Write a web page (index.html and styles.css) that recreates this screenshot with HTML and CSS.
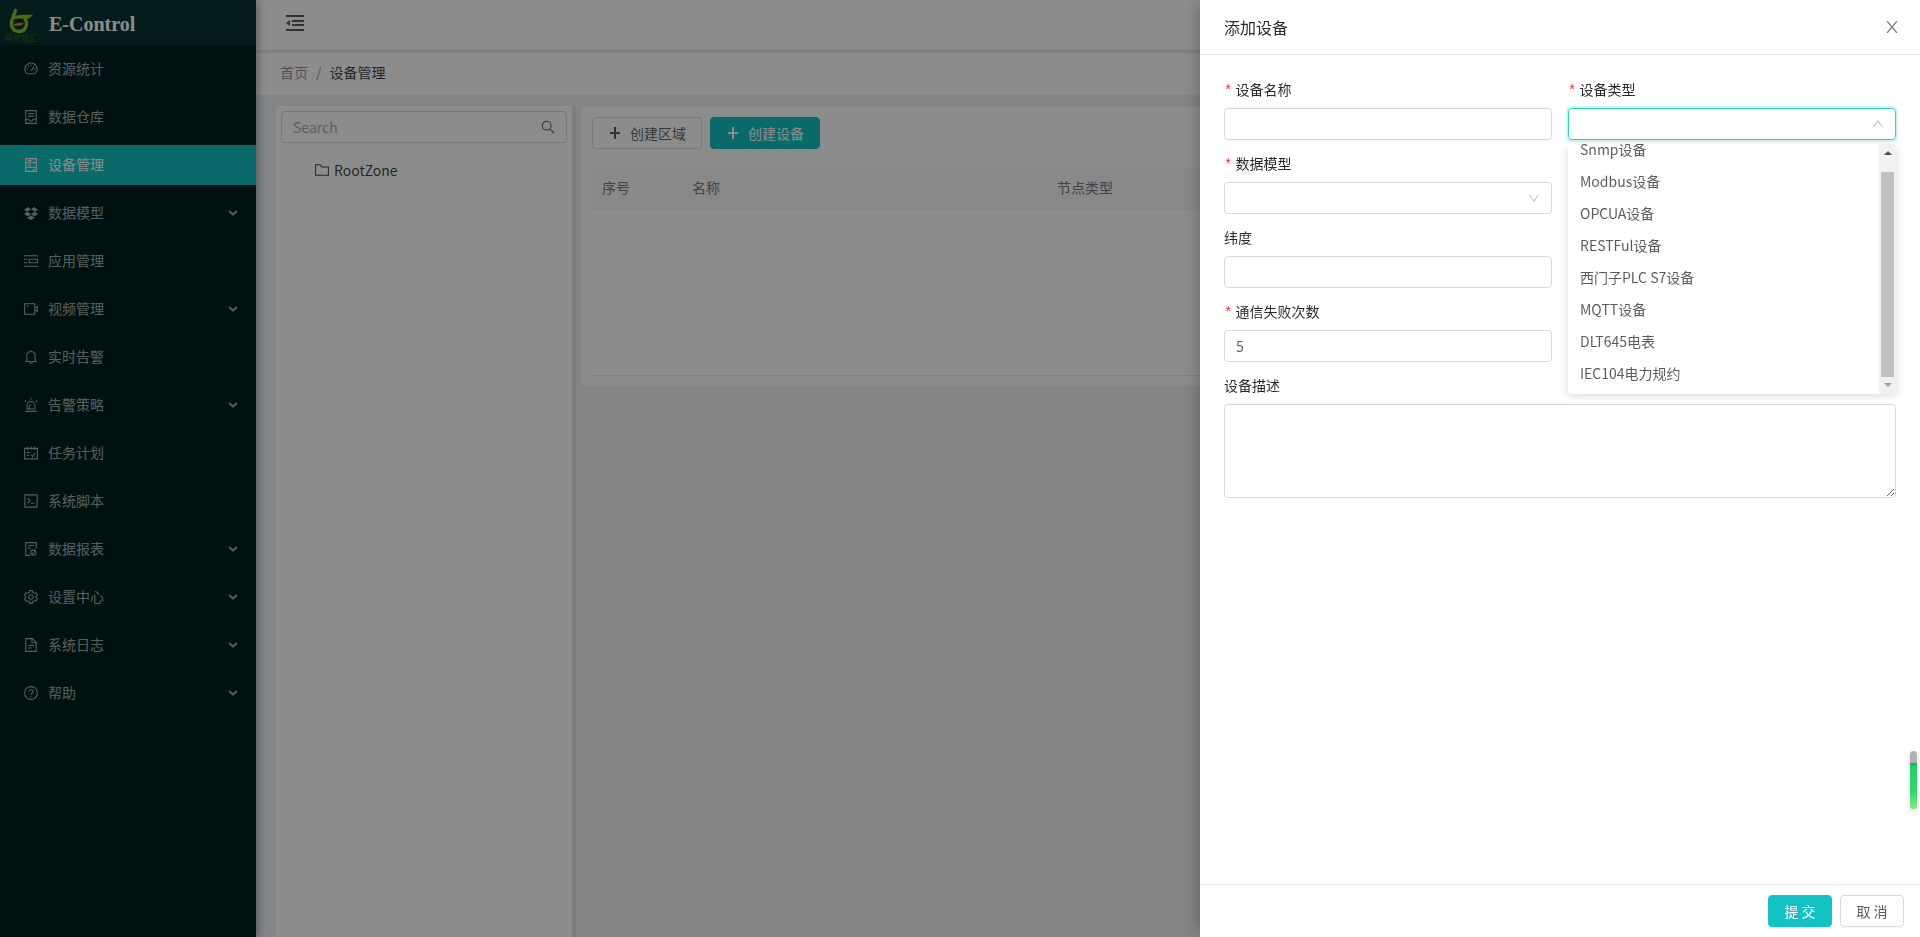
FILE: index.html
```html
<!DOCTYPE html>
<html lang="zh-CN">
<head>
<meta charset="utf-8">
<title>E-Control</title>
<link rel="stylesheet" href="styles.css">
</head>
<body>
<svg class="sprite" aria-hidden="true">
  <symbol id="down" viewBox="0 0 16 16"><path d="M2 4l6 8 6-8"/></symbol>
  <symbol id="up" viewBox="0 0 16 16"><path d="M2 12l6-8 6 8"/></symbol>
  <symbol id="caret" viewBox="0 0 8 6"><path d="M0 1l4 3.500L8 1"/></symbol>
  <symbol id="plus" viewBox="0 0 14 14"><path d="M7 1v12M2 7h10"/></symbol>
</svg>
<div class="layout">
  <aside class="sidebar">
    <div class="brand">
      <div class="brand-logo">
        <svg class="brand-mark" viewBox="0 0 32 26" aria-hidden="true">
          <path d="M10.500 2.500L7 12c-2 6 1 11.500 7 11.500 5 0 8-4 7.500-9-.2-1.500-.7-2.500-1.500-3.500" fill="none" stroke="#8fc31f" stroke-width="3.400" stroke-linecap="round"/>
          <path d="M8 8c6-1 12-1.500 20-1.200-2 2.500-4 4.200-7 4.200-5-.8-9-.5-14 1z" fill="#8fc31f"/>
          <path d="M8 16.500c3-1.500 6-1.800 11-1.800-2 3-6 3.500-10 2.800z" fill="#f08300"/>
        </svg>
        <span class="brand-sub">易控智汇</span>
      </div>
      <span class="brand-name">E-Control</span>
    </div>
    <nav class="menu">
      <a class="menu-item" href="#"><svg class="icon" viewBox="0 0 16 16"><path d="M3.500 13.500A7 7 0 1 1 12.500 13.500zM8 3v1.500M3 8h1.500M4.500 4.500l1 1M11.500 8H13M8 10l3.500-4.500"/></svg><span>资源统计</span></a>
      <a class="menu-item" href="#"><svg class="icon" viewBox="0 0 16 16"><path d="M2 .700h12v14.600H2zM4.500 4h7M4.500 7h7M2 10.500h3.500c.5 3 4.500 3 5 0H14"/></svg><span>数据仓库</span></a>
      <a class="menu-item active" href="#"><svg class="icon" viewBox="0 0 16 16"><path d="M2 .700h12v14.600H2zM2 5.500h12M2 10.500h12M4.500 3h4M4.500 8h3.500M10 13h2"/></svg><span>设备管理</span></a>
      <a class="menu-item" href="#"><svg class="icon solid" viewBox="0 0 16 16"><path d="M4.700 1L8 3.700 3.500 6.500 0 4zM11.300 1L16 4l-3.500 2.500L8 3.700zM0 9l3.500-2.500L8 9.200 4.700 12zM16 9l-3.500-2.500L8 9.200l3.300 2.800zM3.500 12.500l1.200.7L8 10.500l3.300 2.700 1.200-.7v1L8 16l-4.500-2.500z"/></svg><span>数据模型</span><svg class="caret"><use href="#caret"/></svg></a>
      <a class="menu-item" href="#"><svg class="icon" viewBox="0 0 16 16"><path d="M0 2h16M0 14h16M0 6h4M0 10h4M6 6h9.400v4H6z"/></svg><span>应用管理</span></a>
      <a class="menu-item" href="#"><svg class="icon" viewBox="0 0 16 16"><path d="M.7 2h11.600v12H.7zM12.300 7l3-2v6l-3-2M3 4.500h2.500"/></svg><span>视频管理</span><svg class="caret"><use href="#caret"/></svg></a>
      <a class="menu-item" href="#"><svg class="icon" viewBox="0 0 16 16"><path d="M3.200 13V6.500a4.800 4.800 0 0 1 9.600 0V13M1.500 13.200h13M8 .300v1.500M6.300 14.200c.5 1.600 2.900 1.600 3.400 0"/></svg><span>实时告警</span></a>
      <a class="menu-item" href="#"><svg class="icon" viewBox="0 0 16 16"><path d="M3.500 12.500V8.500a4.500 4.500 0 0 1 9 0v4zM1.500 15.300h13M8 0v2M1 3l1.500 1.500M15 3l-1.500 1.500M6 12V9.500C6 8.500 7 8 8 8"/></svg><span>告警策略</span><svg class="caret"><use href="#caret"/></svg></a>
      <a class="menu-item" href="#"><svg class="icon" viewBox="0 0 16 16"><path d="M.7 2.700h14.600v12H.7zM4 .500v4M8 .500v4M12 .500v4M3 7.500h4M3 10.500h3M8 10l2 2 3-4"/></svg><span>任务计划</span></a>
      <a class="menu-item" href="#"><svg class="icon" viewBox="0 0 16 16"><path d="M1 1h14v14H1zM4 5l3 2.700L4 10.500M8 10.500h4"/></svg><span>系统脚本</span></a>
      <a class="menu-item" href="#"><svg class="icon" viewBox="0 0 16 16"><path d="M7 15.300H2V.700h12v7M4.500 4h7M4.500 7h3M13.800 12a3 3 0 1 1-6 0 3 3 0 0 1 6 0zM9 14l4-4"/></svg><span>数据报表</span><svg class="caret"><use href="#caret"/></svg></a>
      <a class="menu-item" href="#"><svg class="icon" viewBox="0 0 16 16"><path d="M6.500.700h3l.6 2 1.600 1 2-.5 1.600 2.600L13.900 7.300v1.400l1.400 1.500-1.600 2.600-2-.5-1.600 1-.6 2h-3l-.6-2-1.600-1-2 .5L.7 10.200 2.100 8.700V7.300L.7 5.800l1.600-2.600 2 .5 1.600-1zM10.500 8a2.500 2.500 0 1 1-5 0 2.500 2.500 0 0 1 5 0z"/></svg><span>设置中心</span><svg class="caret"><use href="#caret"/></svg></a>
      <a class="menu-item" href="#"><svg class="icon" viewBox="0 0 16 16"><path d="M2 .700h7.500L14 5v10.300H2zM9 .700V5.500h5M4.500 8.500h7M4.500 11.500h4"/></svg><span>系统日志</span><svg class="caret"><use href="#caret"/></svg></a>
      <a class="menu-item" href="#"><svg class="icon" viewBox="0 0 16 16"><path d="M15.300 8A7.300 7.300 0 1 1 .700 8a7.300 7.300 0 0 1 14.600 0zM5.700 6.500c0-3 4.600-3 4.600 0C10.300 8 8 8 8 9.800M8 11v1.500"/></svg><span>帮助</span><svg class="caret"><use href="#caret"/></svg></a>
    </nav>
  </aside>
  <div class="main">
    <header class="topbar">
      <button class="fold" aria-label="收起菜单"><svg viewBox="0 0 18 16"><path d="M0 1h18M6 6h12M6 10h12M0 15h18" fill="none" stroke="currentColor" stroke-width="2"/><path d="M0 8l4-3v6z" fill="currentColor"/></svg></button>
    </header>
    <nav class="breadcrumb"><a href="#">首页</a><span>/</span><b>设备管理</b></nav>
    <div class="content">
      <section class="tree-pane">
        <div class="search"><input type="text" placeholder="Search" aria-label="Search"><svg viewBox="0 0 16 16"><path d="M11.500 6.500a5 5 0 1 1-10 0 5 5 0 0 1 10 0zM10.300 10.300L15 15"/></svg></div>
        <div class="tree-node"><svg class="icon" viewBox="0 0 16 16"><path d="M.7 2h5l2 2.500h7.600V14H.7z"/></svg><span>RootZone</span></div>
      </section>
      <div class="splitter"></div>
      <section class="list-pane">
        <div class="toolbar">
          <button class="btn"><svg class="plus"><use href="#plus"/></svg>创建区域</button>
          <button class="btn primary"><svg class="plus"><use href="#plus"/></svg>创建设备</button>
        </div>
        <table class="grid">
          <colgroup><col class="col-no"><col class="col-name"><col></colgroup>
          <thead><tr><th>序号</th><th>名称</th><th>节点类型</th></tr></thead>
          <tbody><tr><td colspan="3"></td></tr></tbody>
        </table>
      </section>
    </div>
  </div>
</div>
<div class="mask"></div>
<section class="drawer" role="dialog" aria-labelledby="drawer-title">
  <header class="drawer-head">
    <h1 id="drawer-title">添加设备</h1>
    <button class="close" aria-label="关闭"><svg viewBox="0 0 12 12"><path d="M1 0l10 12M11 0L1 12"/></svg></button>
  </header>
  <form class="drawer-body">
    <div class="field"><label class="required" for="name">设备名称</label><input class="control" id="name" type="text"></div>
    <div class="field">
      <label class="required" for="type">设备类型</label>
      <div class="select open"><select class="control" id="type"><option></option></select><svg><use href="#up"/></svg></div>
      <div class="dropdown">
        <ul class="options">
          <li>Snmp设备</li><li>Modbus设备</li><li>OPCUA设备</li><li>RESTFul设备</li><li>西门子PLC S7设备</li><li>MQTT设备</li><li>DLT645电表</li><li>IEC104电力规约</li>
        </ul>
        <div class="scrollbar"><i class="arrow-up"></i><div class="thumb"></div><i class="arrow-down"></i></div>
      </div>
    </div>
    <div class="field row-start"><label class="required" for="model">数据模型</label><div class="select"><select class="control" id="model"><option></option></select><svg><use href="#down"/></svg></div></div>
    <div class="field row-start"><label for="lat">纬度</label><input class="control" id="lat" type="text"></div>
    <div class="field row-start"><label class="required" for="fails">通信失败次数</label><input class="control" id="fails" type="text" value="5"></div>
    <div class="field wide"><label for="desc">设备描述</label><textarea class="control" id="desc"></textarea></div>
  </form>
  <footer class="drawer-foot"><button class="btn primary">提 交</button><button class="btn">取 消</button></footer>
</section>
<div class="meter"><div class="meter-fill"></div></div>
</body>
</html>
```
FILE: styles.css
```css
* { box-sizing: border-box; }
body {
  margin: 0;
  font: 14px/22px "Noto Sans CJK SC", "Noto Sans", sans-serif;
  color: rgba(0, 0, 0, .65);
  background: #f0f2f5;
}
button, input, select, textarea { font: inherit; color: inherit; }
button { cursor: pointer; }
a { color: inherit; text-decoration: none; }
svg { flex: none; fill: none; stroke: currentColor; }
.sprite { display: none; }
.layout { display: flex; height: 100vh; overflow: hidden; }

.sidebar {
  flex: none;
  width: 256px;
  background: #001f1f;
  color: rgba(255, 255, 255, .65);
  box-shadow: 2px 0 8px rgba(0, 21, 41, .35);
  z-index: 1;
}
.brand { display: flex; height: 45px; padding: 8px 5px 0; gap: 11px; background: #053333; }
.brand-logo { display: flex; flex-direction: column; align-items: center; width: 32px; margin-right: 1px; }
.brand-mark { width: 32px; height: 26px; stroke: none; }
.brand-sub { font-size: 8px; line-height: 8px; color: #1f5c10; font-weight: 700; white-space: nowrap; }
.brand-name { font: bold 20px/32px "Liberation Serif", serif; color: #fff; }
.menu { display: flex; flex-direction: column; gap: 8px; padding-top: 4px; }
.menu-item { display: flex; align-items: center; gap: 10px; height: 40px; padding: 0 19px 0 24px; }
.menu-item span { padding-bottom: 2px; }
.menu-item.active { background: #13c2c2; color: #fff; }
.icon { width: 14px; height: 14px; stroke-width: 1.2; }
.icon.solid { fill: currentColor; stroke: none; }
.caret { width: 8px; height: 6px; margin-left: auto; stroke-width: 2; }

.main { flex: 1; min-width: 0; display: flex; flex-direction: column; }
.topbar {
  flex: none;
  height: 50px;
  padding: 14px 30px;
  background: #fff;
  box-shadow: 0 1px 4px rgba(0, 21, 41, .2);
  z-index: 0;
  position: relative;
}
.fold { display: flex; padding: 1px 0; border: 0; background: none; }
.fold svg { width: 18px; height: 16px; stroke: none; }
.breadcrumb { flex: none; display: flex; gap: 8px; height: 45px; padding: 11px 24px; background: #fff; color: rgba(0, 0, 0, .45); }
.breadcrumb b { font-weight: 400; color: rgba(0, 0, 0, .75); }
.content { flex: 1; display: flex; align-items: stretch; padding: 11px 20px 0; }
.tree-pane { width: 296px; padding: 5px; background: #fff; }
.search { display: flex; align-items: center; height: 32px; padding: 0 11px; border: 1px solid #d9d9d9; border-radius: 4px; }
.search input { flex: 1; min-width: 0; padding: 0; border: 0; background: none; outline: 0; }
.search input::placeholder { color: #aaa; }
.search svg { width: 14px; height: 14px; stroke-width: 1.2; }
.tree-node { display: flex; align-items: center; gap: 5px; padding: 16px 34px; color: rgba(0, 0, 0, .75); }
.splitter { width: 4px; margin-right: 6px; background: #e2e3e5; }
.list-pane { flex: 1; align-self: flex-start; margin-top: 1px; padding: 10px; background: #fff; }
.toolbar { display: flex; gap: 8px; margin-bottom: 18px; }
.btn {
  display: flex;
  align-items: center;
  justify-content: center;
  gap: 8px;
  min-width: 64px;
  height: 32px;
  padding: 0 15px 1px;
  border: 1px solid #d9d9d9;
  border-radius: 4px;
  background: #fff;
  box-shadow: 0 2px 0 rgba(0, 0, 0, .02);
  white-space: nowrap;
}
.btn.primary { border-color: #13c2c2; background: #13c2c2; color: #fff; }
.plus { width: 14px; height: 14px; stroke-width: 2; }
.grid { width: 100%; border-collapse: collapse; table-layout: fixed; }
.col-no { width: 90px; }
.col-name { width: 365px; }
.grid th { height: 42px; padding: 0 10px 2px; text-align: left; font-weight: 400; color: #74777d; background: #fafafa; border-bottom: 1px solid #ebeef5; }
.grid td { height: 166px; border-bottom: 1px solid #e8e8e8; }

.mask { position: fixed; inset: 0; background: rgba(0, 0, 0, .45); z-index: 2; }
.drawer {
  position: fixed;
  inset: 0 0 0 auto;
  width: 720px;
  display: flex;
  flex-direction: column;
  background: #fff;
  box-shadow: -6px 0 16px -4px rgba(0, 0, 0, .25);
  z-index: 3;
}
.drawer-head { display: flex; align-items: center; justify-content: space-between; padding: 16px 22px 16px 24px; border-bottom: 1px solid #e8e8e8; }
.drawer-head h1 { margin: 0; font-size: 16px; line-height: 22px; font-weight: 400; color: rgba(0, 0, 0, .85); }
.close { display: flex; padding: 0; border: 0; background: none; color: rgba(0, 0, 0, .5); }
.close svg { width: 12px; height: 12px; stroke-width: 1.3; }
.drawer-body { flex: 1; display: grid; grid-template-columns: 1fr 1fr; align-content: start; gap: 13px 16px; padding: 24px; }
.field { position: relative; display: flex; flex-direction: column; gap: 9px; }
.row-start { grid-column: 1; }
.wide { grid-column: 1 / -1; }
.field label { height: 20px; line-height: 20px; color: rgba(0, 0, 0, .85); }
.required::before { content: "*"; margin-right: 3px; font-family: "Liberation Mono", monospace; line-height: 1; color: #f5222d; }
.control { display: block; width: 100%; height: 32px; padding: 4px 11px; border: 1px solid #d9d9d9; border-radius: 4px; background: #fff; outline: 0; }
textarea.control { height: 94px; resize: vertical; }
.select { position: relative; }
.select select { appearance: none; }
.select svg { position: absolute; top: 10px; right: 12px; width: 12px; height: 12px; color: #bfbfbf; stroke-width: 1.5; pointer-events: none; }
.select.open select { border-color: #36cfc9; box-shadow: 0 0 0 2px rgba(19, 194, 194, .2); }
.dropdown {
  position: absolute;
  top: 65px;
  left: 0;
  right: 0;
  display: flex;
  height: 250px;
  border-radius: 4px;
  background: #fff;
  box-shadow: 0 2px 8px rgba(0, 0, 0, .15);
  overflow: hidden;
  z-index: 4;
}
.options { flex: 1; display: flex; flex-direction: column; justify-content: flex-end; margin: 0; padding: 0 0 4px; list-style: none; }
.options li { flex: none; padding: 4px 12px 6px; }
.scrollbar { display: flex; flex-direction: column; align-items: center; width: 17px; background: #f1f1f1; }
.thumb { flex: 1; width: 13px; margin: 17px 0 6px; background: #c1c1c1; }
.arrow-up, .arrow-down { border: 4px solid transparent; border-top-width: 0; border-bottom: 4px solid #505050; }
.arrow-up { margin-top: 7px; }
.arrow-down { margin-bottom: 7px; border-bottom-width: 0; border-top: 4px solid #a3a3a3; }
.drawer-foot { display: flex; justify-content: flex-end; gap: 8px; padding: 10px 16px; border-top: 1px solid #e8e8e8; }

.meter { position: fixed; right: 3px; bottom: 128px; width: 7px; height: 58px; padding-top: 12px; border-radius: 4px; background: #b0b0b0; box-shadow: 0 3px 6px rgba(0, 0, 0, .15); overflow: hidden; z-index: 5; }
.meter-fill { height: 100%; background: linear-gradient(#18b858 0 2px, #28cc6c 3px, #2ed573 60%, #7bed7f); }
```
